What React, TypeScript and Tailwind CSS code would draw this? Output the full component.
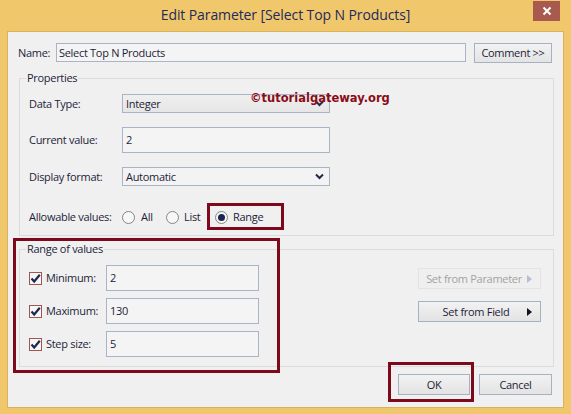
import React from "react";

const Chevron = () => (
  <svg width="9" height="7" viewBox="0 0 9 7" className="shrink-0">
    <polyline points="1,1.5 4.5,5 8,1.5" fill="none" stroke="#2a2448" strokeWidth="2" />
  </svg>
);

const RightTri = ({ color }: { color: string }) => (
  <svg width="5" height="8" viewBox="0 0 5 8" className="shrink-0">
    <polygon points="0,0 5,4 0,8" fill={color} />
  </svg>
);

const Check = () => (
  <div className="w-[13px] h-[13px] border border-[#a0564c] bg-[#f6f6f6] flex items-center justify-center shrink-0">
    <svg width="11" height="11" viewBox="0 0 11 11">
      <polyline points="1.5,5.5 4.2,8.5 9.8,1.8" fill="none" stroke="#1e2752" strokeWidth="2.2" />
    </svg>
  </div>
);

const Radio = ({ on }: { on?: boolean }) => (
  <div className="w-[13px] h-[13px] rounded-full border border-[#858585] bg-[#f7f7f7] flex items-center justify-center shrink-0">
    {on && <div className="w-[7px] h-[7px] rounded-full bg-[#1c2550]" />}
  </div>
);

export default function App() {
  const text = "text-[#1d1d38]";
  return (
    <div className="relative w-[571px] h-[414px] bg-[#f0c76b] flex flex-col font-['Open_Sans','Noto_Sans',sans-serif] text-[11px] leading-[14px] tracking-[-0.3px] overflow-hidden">
      {/* title bar */}
      <div className="relative h-[31px] shrink-0 flex items-center justify-center">
        <span className="text-[14px] tracking-[-0.1px] text-[#232a5c] -mt-[1px]">Edit Parameter [Select Top N Products]</span>
        <div className="absolute right-[11px] top-[1px] w-[27px] h-[20px] bg-[#a85a4e] flex items-center justify-center">
          <svg width="10" height="10" viewBox="0 0 10 10">
            <path d="M1.5 1.5 L8.5 8.5 M8.5 1.5 L1.5 8.5" stroke="#ffffff" strokeWidth="2" />
          </svg>
        </div>
      </div>

      {/* client */}
      <div className={`flex-1 mx-[7px] mb-[6px] border border-[#d9b25e] bg-[#f0f0f0] flex flex-col ${text}`}>
        {/* name row */}
        <div className="flex items-start mt-[11px] pl-[10px]">
          <div className="w-[38px] h-[19px] flex items-center">Name:</div>
          <div className="w-[410px] h-[19px] border border-[#a9b5c6] bg-[#f4f4f4] flex items-center pl-[2px]">
            Select Top N Products
          </div>
          <div className="ml-[8px] w-[78px] h-[20px] border border-[#a6b1c1] bg-gradient-to-b from-[#f2f2f2] to-[#e4e4e4] flex items-center justify-center">
            Comment &gt;&gt;
          </div>
        </div>

        {/* properties */}
        <fieldset className="ml-[11px] mt-[8px] w-[535px] border border-[#dcdcdc] p-0 m-0">
          <legend className="ml-[6px] px-[1px] leading-[14px]">Properties</legend>
          <div className="flex flex-col pt-[9px] pb-[8px] pl-[9px]">
            <div className="flex items-center h-[19px]">
              <div className="w-[93px]">Data Type:</div>
              <div className="w-[208px] h-[19px] border border-[#a9b5c6] bg-gradient-to-b from-[#efefef] to-[#e6e6e6] flex items-center pl-[3px] pr-[5px]">
                <span className="flex-1">Integer</span>
                <Chevron />
              </div>
            </div>
            <div className="flex items-center h-[26px] mt-[14px]">
              <div className="w-[93px]">Current value:</div>
              <div className="w-[208px] h-[26px] border border-[#a9b5c6] bg-[#f4f4f4] flex items-center pl-[3px]">2</div>
            </div>
            <div className="flex items-center h-[19px] mt-[14px]">
              <div className="w-[93px]">Display format:</div>
              <div className="w-[208px] h-[19px] border border-[#a9b5c6] bg-[#f3f3f3] flex items-center pl-[3px] pr-[5px]">
                <span className="flex-1">Automatic</span>
                <Chevron />
              </div>
            </div>
            <div className="flex items-center h-[20px] mt-[21px]">
              <div className="w-[93px]">Allowable values:</div>
              <div className="w-[44px] flex items-center">
                <Radio />
                <span className="ml-[6px]">All</span>
              </div>
              <div className="w-[49px] flex items-center">
                <Radio />
                <span className="ml-[5px]">List</span>
              </div>
              <div className="flex items-center">
                <Radio on />
                <span className="ml-[5px]">Range</span>
              </div>
            </div>
          </div>
        </fieldset>

        {/* range of values */}
        <fieldset className="ml-[11px] mt-[6px] w-[535px] border border-[#dcdcdc] p-0 m-0">
          <legend className="ml-[6px] px-[1px] leading-[14px]">Range of values</legend>
          <div className="flex pt-[9px] pb-[9px] pl-[9px] pr-[12px]">
            <div className="flex flex-col gap-[7px]">
              {[
                ["Minimum:", "2"],
                ["Maximum:", "130"],
                ["Step size:", "5"],
              ].map(([l, v]) => (
                <div key={l} className="flex items-center h-[26px]">
                  <Check />
                  <span className="ml-[4px] w-[60px]">{l}</span>
                  <div className="w-[153px] h-[26px] border border-[#a9b5c6] bg-[#f4f4f4] flex items-center pl-[3px]">{v}</div>
                </div>
              ))}
            </div>
            <div className="ml-auto flex flex-col pt-[3px] gap-[12px]">
              <div className="w-[123px] h-[21px] border border-[#e3e3e3] bg-[#efefef] flex items-center pr-[8px] text-[#a3a3a3]">
                <span className="flex-1 text-center pl-[2px] whitespace-nowrap">Set from Parameter</span>
                <RightTri color="#b4c0d0" />
              </div>
              <div className="w-[123px] h-[21px] border border-[#a6b1c1] bg-gradient-to-b from-[#f2f2f2] to-[#e3e3e3] flex items-center pr-[8px]">
                <span className="flex-1 text-center pl-[6px] whitespace-nowrap">Set from Field</span>
                <RightTri color="#111122" />
              </div>
            </div>
          </div>
        </fieldset>

        {/* bottom buttons */}
        <div className="flex justify-end mt-[7px] pr-[11px] gap-[9px]">
          <div className="w-[72px] h-[21px] border border-[#a6b1c1] bg-gradient-to-b from-[#f2f2f2] to-[#e3e3e3] flex items-center justify-center">OK</div>
          <div className="w-[73px] h-[21px] border border-[#a6b1c1] bg-gradient-to-b from-[#f2f2f2] to-[#e3e3e3] flex items-center justify-center">Cancel</div>
        </div>
      </div>

      {/* watermark */}
      <div className="absolute left-[250px] top-[91px] font-['DejaVu_Sans',sans-serif] font-bold text-[11.5px] leading-[14px] tracking-normal text-[#8a0c16]">
        ©tutorialgateway.org
      </div>

      {/* red annotation boxes */}
      <div className="absolute left-[207px] top-[203px] w-[77px] h-[27px] border-[3px] border-[#7c0a1c]" />
      <div className="absolute left-[13px] top-[238px] w-[267px] h-[135px] border-[3px] border-[#7c0a1c]" />
      <div className="absolute left-[388px] top-[362px] w-[86px] h-[40px] border-[3px] border-[#7c0a1c]" />
    </div>
  );
}
